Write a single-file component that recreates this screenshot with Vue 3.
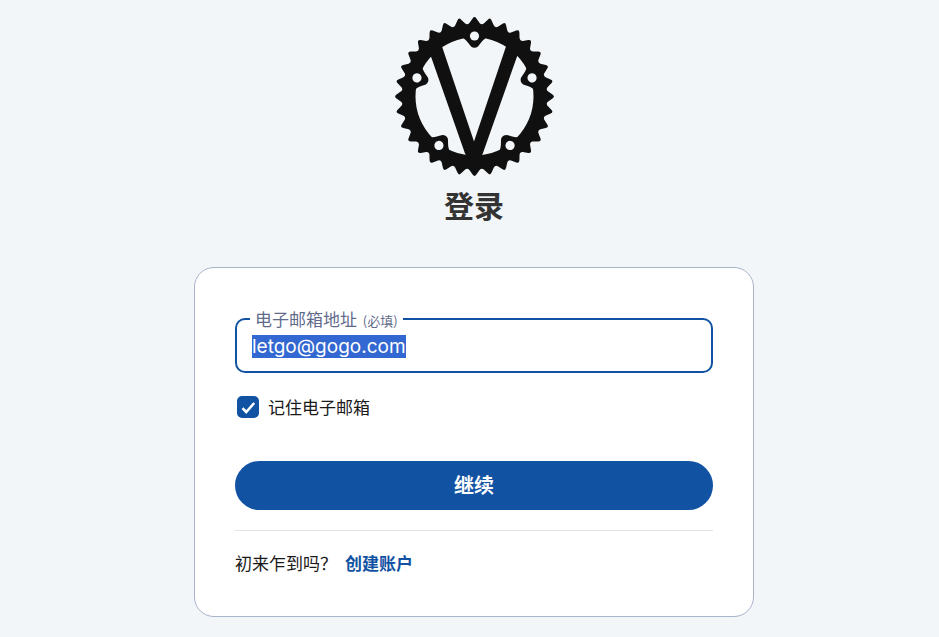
<script setup>
import {ref, onMounted} from "vue";

const email = ref("letgo@gogo.com");
const remember = ref(true);
const emailInput = ref(null);

// chainring outline: one rounded tooth every 360 / 32 degrees
const teeth = 32;
const polar = (radius, degrees) => {
  const angle = degrees * Math.PI / 180;
  return `${(radius * Math.sin(angle)).toFixed(2)} ${(-radius * Math.cos(angle)).toFixed(2)}`;
};
const step = 360 / teeth;
const outline = Array.from({length: teeth}, (_, i) => {
  const a = i * step;
  return `${i ? "L" : "M"}${polar(78, a - 1.4)}Q${polar(80.8, a)} ${polar(78, a + 1.4)}`
    + `L${polar(73.6, a + 4)}Q${polar(71.6, a + step / 2)} ${polar(73.6, a + step - 4)}`;
}).join("") + "Z";
const bolts = [0, 72, 144, 216, 288];

onMounted(() => {
  emailInput.value.focus();
  emailInput.value.select();
});
</script>
<template>
  <main class="page">
    <svg class="logo" viewBox="-80.5 -80.5 160 160" role="img" aria-label="V">
      <path :d="outline"/>
      <circle class="cutout" r="59"/>
      <path d="M-46 -47L-34.5 -56L-.5 45L33.5 -56L45 -47L8.3 57L5 64H-5L-9.5 57Z"/>
      <g v-for="bolt in bolts" :key="bolt" :transform="`rotate(${bolt})`">
        <path d="M-14 -61L-10.4 -57.8Q-8.5 -56.5 -7 -54.5L-3.5 -50Q0 -47.4 3.5 -50L7 -54.5Q8.5 -56.5 10.4 -57.8L14 -61Z"/>
        <circle class="cutout" cy="-60.5" r="4.6"/>
      </g>
    </svg>
    <h1>登录</h1>
    <form class="card" @submit.prevent>
      <fieldset class="field">
        <legend>
          <label for="email">电子邮箱地址 <small>(必填)</small></label>
        </legend>
        <input id="email" ref="emailInput" v-model="email" type="text" inputmode="email" spellcheck="false" required>
      </fieldset>
      <label class="remember">
        <input v-model="remember" type="checkbox">
        <svg viewBox="0 0 22 22" aria-hidden="true"><path d="M5.5 12.2L9.2 16L17.2 7"/></svg>
        <span>记住电子邮箱</span>
      </label>
      <button type="submit">继续</button>
      <p class="signup">初来乍到吗？<a href="#">创建账户</a></p>
    </form>
  </main>
</template>
<style>
body {
  background: #f2f6f9;
}
</style>
<style scoped>
.page {
  display: flex;
  flex-direction: column;
  align-items: center;
  padding: 16px 0 20px 9px;
  font-family: "Noto Sans CJK SC", sans-serif;
  font-size: 17px;
  line-height: 24px;
  color: #191919;
}

.logo {
  width: 160px;
  height: 160px;
  fill: #101010;
}

.logo .cutout {
  fill: #f2f6f9;
}

h1 {
  margin: 6px 0 41px;
  font-size: 30px;
  line-height: 44px;
  font-weight: 700;
  color: #333;
}

.card {
  box-sizing: border-box;
  width: 100%;
  max-width: 560px;
  padding: 39px 40px 40px;
  border: 1px solid #a9b3ca;
  border-radius: 20px;
  background: #fff;
}

.field {
  min-width: 0;
  margin: 0;
  padding: 0 13px;
  border: 2px solid #1152a2;
  border-radius: 10px;
}

.field legend {
  padding: 0 5px;
  color: #5f6b8b;
}

.field small {
  margin-left: 2px;
  font-size: 13px;
  line-height: 1;
}

.field input {
  display: block;
  box-sizing: border-box;
  width: 100%;
  height: 40px;
  padding: 2px 2px 12px;
  border: 0;
  outline: 0;
  background: none;
  font-family: Inter, "Noto Sans CJK SC", sans-serif;
  font-size: 19px;
  line-height: 26px;
  color: #191919;
}

.field input::selection {
  background: #3367d1;
  color: #fff;
}

.remember {
  display: grid;
  grid-template-columns: 22px auto;
  justify-content: start;
  align-items: center;
  column-gap: 9px;
  margin: 22px 0 0 2px;
}

.remember input,
.remember svg {
  grid-area: 1 / 1;
  width: 22px;
  height: 22px;
  margin: 0;
}

.remember input {
  appearance: none;
  border: 2px solid #1152a2;
  border-radius: 5px;
}

.remember input:checked {
  background: #1152a2;
}

.remember svg {
  pointer-events: none;
  fill: none;
  stroke: #fff;
  stroke-width: 2.6;
}

button {
  display: block;
  width: 100%;
  height: 49px;
  margin: 42px 0 20px;
  padding: 0 0 2px;
  border: 0;
  border-radius: 25px;
  background: #1152a2;
  font: inherit;
  font-size: 20px;
  font-weight: 700;
  color: #fff;
  cursor: pointer;
}

.signup {
  display: flex;
  gap: 8px;
  margin: 0;
  padding: 20px 0 1px;
  border-top: 1px solid #e3e3e3;
}

.signup a {
  font-weight: 700;
  color: #1152a2;
  text-decoration: none;
}
</style>
